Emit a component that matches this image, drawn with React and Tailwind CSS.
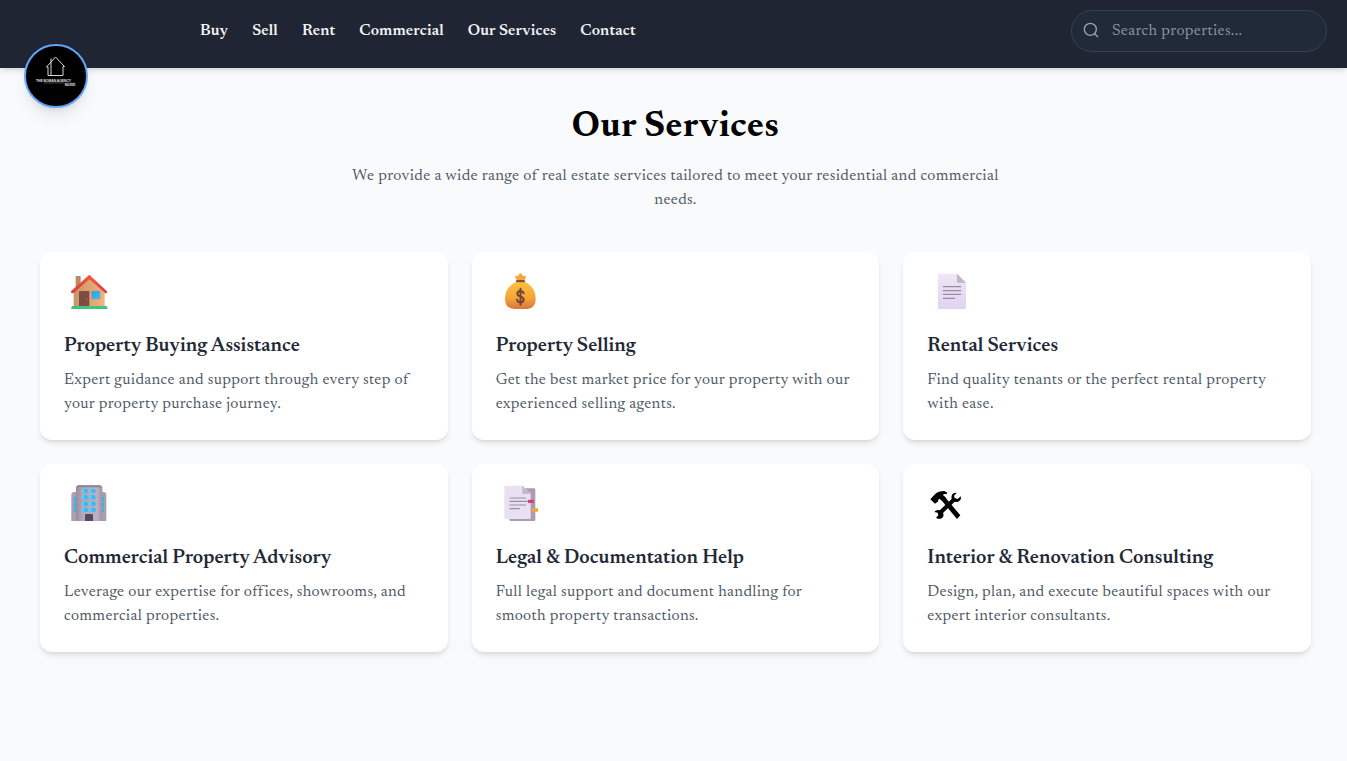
const serif = "font-['Newsreader','Liberation_Serif',serif]";

function House() {
  return (
    <>
      <defs>
        <linearGradient id="wall" x1="0" x2="1"><stop offset="0" stopColor="#c99468" /><stop offset="1" stopColor="#f0b480" /></linearGradient>
        <linearGradient id="roof" x1="0" x2="1"><stop offset="0" stopColor="#d93a3a" /><stop offset=".6" stopColor="#f4583c" /><stop offset="1" stopColor="#d33a45" /></linearGradient>
        <linearGradient id="pane" x1="0" y1="0" x2="1" y2="1"><stop offset="0" stopColor="#2f9df4" /><stop offset="1" stopColor="#25c8fb" /></linearGradient>
      </defs>
      <path d="M47 38q0-2 2-2h11q2 0 2 2v32H47z" fill="#bd8a5f" />
      <path d="M41 82 88 38l46 44v46H41z" fill="url(#wall)" />
      <path d="M88 32 33 82q-1 6 7 6L88 46l48 42q7 0 5-6z" fill="url(#roof)" />
      <rect x="57" y="81" width="31" height="46" rx="2" fill="#7d4c43" />
      <circle cx="82" cy="106" r="2" fill="#c08a67" />
      <rect x="94" y="80" width="27" height="26" rx="2" fill="#c98b62" />
      <rect x="96" y="82" width="23" height="22" rx="1" fill="url(#pane)" />
      <path d="M36 126h104l3 9H33z" fill="#3fc583" />
    </>
  );
}

function MoneyBag() {
  return (
    <>
      <defs>
        <linearGradient id="bag" x1="0" y1="0" x2="0" y2="1"><stop offset="0" stopColor="#ffc13c" /><stop offset=".6" stopColor="#f6a437" /><stop offset="1" stopColor="#d9743f" /></linearGradient>
      </defs>
      <path d="M69 37q4-4 9 0 1-8 7-9 6 1 8 9 6-4 9 1l-5 12H75z" fill="#f9a636" />
      <path d="M74 53C50 62 39 84 39 104q0 31 32 31h28q32 0 32-31c0-20-10-42-34-51z" fill="url(#bag)" />
      <rect x="72" y="48" width="27" height="7" rx="3.500" fill="#85533f" />
      <path d="M95 88q-2-7-10-7-9 0-9 8 0 6 9 8 10 3 10 10 0 8-10 8-9 0-10-8M85.500 74v48" fill="none" stroke="#704536" strokeWidth="6" strokeLinecap="round" />
    </>
  );
}

function Page() {
  return (
    <>
      <defs>
        <linearGradient id="sheet" x1="0" y1="0" x2="0" y2="1"><stop offset="0" stopColor="#eee7f5" /><stop offset="1" stopColor="#e1d3f0" /></linearGradient>
      </defs>
      <path d="M45 31q0-2 2-2h55l27 27v76q0 3-3 3H48q-3 0-3-3z" fill="url(#sheet)" />
      <path d="M102 29l27 27h-25q-2 0-2-2z" fill="#c3b4cb" />
      <path d="M61 68h52M61 80h52M61 91h52M61 103h34" stroke="#998ca2" strokeWidth="3.500" strokeLinecap="round" />
    </>
  );
}

function Building() {
  return (
    <>
      <defs>
        <linearGradient id="tower" x1="0" x2="1"><stop offset="0" stopColor="#978b9d" /><stop offset=".25" stopColor="#b3a8b8" /><stop offset=".8" stopColor="#bcb1c1" /><stop offset="1" stopColor="#9d91a5" /></linearGradient>
      </defs>
      <path d="M34 54l5-6h95l5 6v81H34z" fill="#aaa0b0" />
      <path d="M41 64h7v12h-7zM41 80h7v12h-7zM41 97h7v12h-7zM125 64h7v12h-7zM125 80h7v12h-7zM125 97h7v12h-7z" fill="#2fb5f2" />
      <path d="M48 33l6-5h67l6 5v102H48z" fill="url(#tower)" />
      <path d="M48 34l6-6h67l6 6z" fill="#8e8496" />
      <path d="M66 39h17v12H66zM89 39h17v12H89zM66 58h17v12H66zM89 58h17v12H89zM66 77h17v12H66zM89 77h17v12H89zM66 96h17v12H66zM89 96h17v12H89z" fill="#36b9f7" />
      <path d="M66 39h6v12h-6zM89 39h6v12h-6zM66 58h6v12h-6zM89 58h6v12h-6zM66 77h6v12h-6zM89 77h6v12h-6zM66 96h6v12h-6zM89 96h6v12h-6z" fill="#5bd0fb" />
      <path d="M75 117q0-3 3-3h18q3 0 3 3v18H75z" fill="#56465f" />
    </>
  );
}

function Tabs() {
  return (
    <>
      <rect x="52" y="37" width="78" height="98" rx="4" fill="#aa9cb3" />
      <path d="M37 33q0-4 4-4h51l24 24v72q0 4-4 4H41q-4 0-4-4z" fill="#e9e0f2" />
      <path d="M91 29l25 25H95q-4 0-4-4z" fill="#c4b8cb" />
      <path d="M54 66h47M54 76h50M54 87h47M54 98h28" stroke="#9a8fa4" strokeWidth="3.500" strokeLinecap="round" />
      <path d="M109 71h17v10h-17l-3-5z" fill="#df3c72" />
      <path d="M121 97h17v10h-17l-3-5z" fill="#eaa83c" />
    </>
  );
}

function Tools() {
  return (
    <>
      <path d="M53 70 64 61 112 118 102 129z" />
      <path d="M22 70 36 55Q46 45 64 45l9 5-3 5q-8-2-10 2l8 8-10 10-9-7-4 4 1 4-10 7z" />
      <path d="M93 51q-10 4-7 18L50 103q-10-3-16 5l10 2 2 8-7 7q11 7 19 0 6-6 2-14l35-34q11 3 17-5 3-5 1-11l-9 8-9-3-2-7 8-8q-4-2-8 0z" />
    </>
  );
}

const services = [
  { icon: House, title: 'Property Buying Assistance', lines: ['Expert guidance and support through every step of', 'your property purchase journey.'] },
  { icon: MoneyBag, title: 'Property Selling', lines: ['Get the best market price for your property with our', 'experienced selling agents.'] },
  { icon: Page, title: 'Rental Services', lines: ['Find quality tenants or the perfect rental property', 'with ease.'] },
  { icon: Building, title: 'Commercial Property Advisory', lines: ['Leverage our expertise for offices, showrooms, and', 'commercial properties.'] },
  { icon: Tabs, title: 'Legal & Documentation Help', lines: ['Full legal support and document handling for', 'smooth property transactions.'] },
  { icon: Tools, title: 'Interior & Renovation Consulting', lines: ['Design, plan, and execute beautiful spaces with our', 'expert interior consultants.'] },
];

const links = ['Buy', 'Sell', 'Rent', 'Commercial', 'Our Services', 'Contact'];

export default function App() {
  return (
    <div className={`min-h-screen bg-[#f9fafb] ${serif}`}>
      <header className="relative flex h-[68px] items-start bg-[#1f2532] pl-[200px] pr-5 pt-2.5 shadow-md">
        <div className="absolute left-6 top-11 h-16 w-16 overflow-hidden rounded-full border-2 border-[#60a5fa] bg-black shadow-lg">
          <svg viewBox="0 0 60 60" className="h-full w-full">
            <path d="M22 29.500V21l-1.500 0L29.500 11l9 9.500H37V29.500zM25 12.500v16.500" fill="none" stroke="#d8d8d8" strokeWidth="1" />
            <text x="10" y="35.500" textLength="35" lengthAdjust="spacingAndGlyphs" fill="#e5e5e5" className="font-['Liberation_Sans',sans-serif] text-[4px] font-bold">THE BOMAN AGENCY</text>
            <path d="M18 37h20" stroke="#777" strokeWidth=".6" />
            <rect x="38.500" y="36.500" width="11" height="3.500" fill="#333" />
            <text x="39" y="39.500" textLength="10" lengthAdjust="spacingAndGlyphs" fill="#ddd" className="font-['Liberation_Sans',sans-serif] text-[3px] font-bold">REAL ESTATE</text>
          </svg>
        </div>
        <nav className="flex gap-6 pt-[9px]">
          {links.map((l) => (
            <a key={l} className="whitespace-nowrap text-base font-semibold leading-6 tracking-[0.14px] text-[#f3f4f6]">{l}</a>
          ))}
        </nav>
        <div className="ml-auto flex h-[42px] w-64 items-center rounded-full border border-[#374151] bg-[#212a38] pl-3">
          <svg viewBox="0 0 24 24" className="-ml-px -mt-0.5 h-4 w-4" fill="none" stroke="#9ca3af" strokeWidth="2" strokeLinecap="round"><circle cx="11" cy="11" r="9" /><path d="m22 22-4.500-4.500" /></svg>
          <span className="ml-[13px] text-base leading-6 tracking-[0.33px] text-[#8d95a2]">Search properties...</span>
        </div>
      </header>
      <main className="pb-10 pl-10 pr-9 pt-10">
        <h1 className="mb-4 text-center text-4xl font-bold tracking-[0.58px] text-black">Our Services</h1>
        <p className="mx-auto mb-10 max-w-2xl text-center text-base leading-6 tracking-[0.34px] text-[#4b5563]">
          We provide a wide range of real estate services tailored to meet your residential and commercial needs.
        </p>
        <div className="grid grid-cols-3 gap-6">
          {services.map(({ icon: Icon, title, lines }) => (
            <section key={title} className="h-[188px] rounded-xl bg-white p-6 shadow-md">
              <svg viewBox="0 0 180 162" className="-ml-1 -mt-3 mb-3.5 block h-[54px] w-[60px]"><Icon /></svg>
              <h2 className="mb-2 whitespace-nowrap text-xl font-semibold leading-7 tracking-[0.03px] text-[#1f2937]">{title}</h2>
              <p className="whitespace-nowrap text-base leading-6 tracking-[0.33px] text-[#4b5563]">
                {lines.map((t) => <span key={t} className="block">{t}</span>)}
              </p>
            </section>
          ))}
        </div>
      </main>
    </div>
  );
}
